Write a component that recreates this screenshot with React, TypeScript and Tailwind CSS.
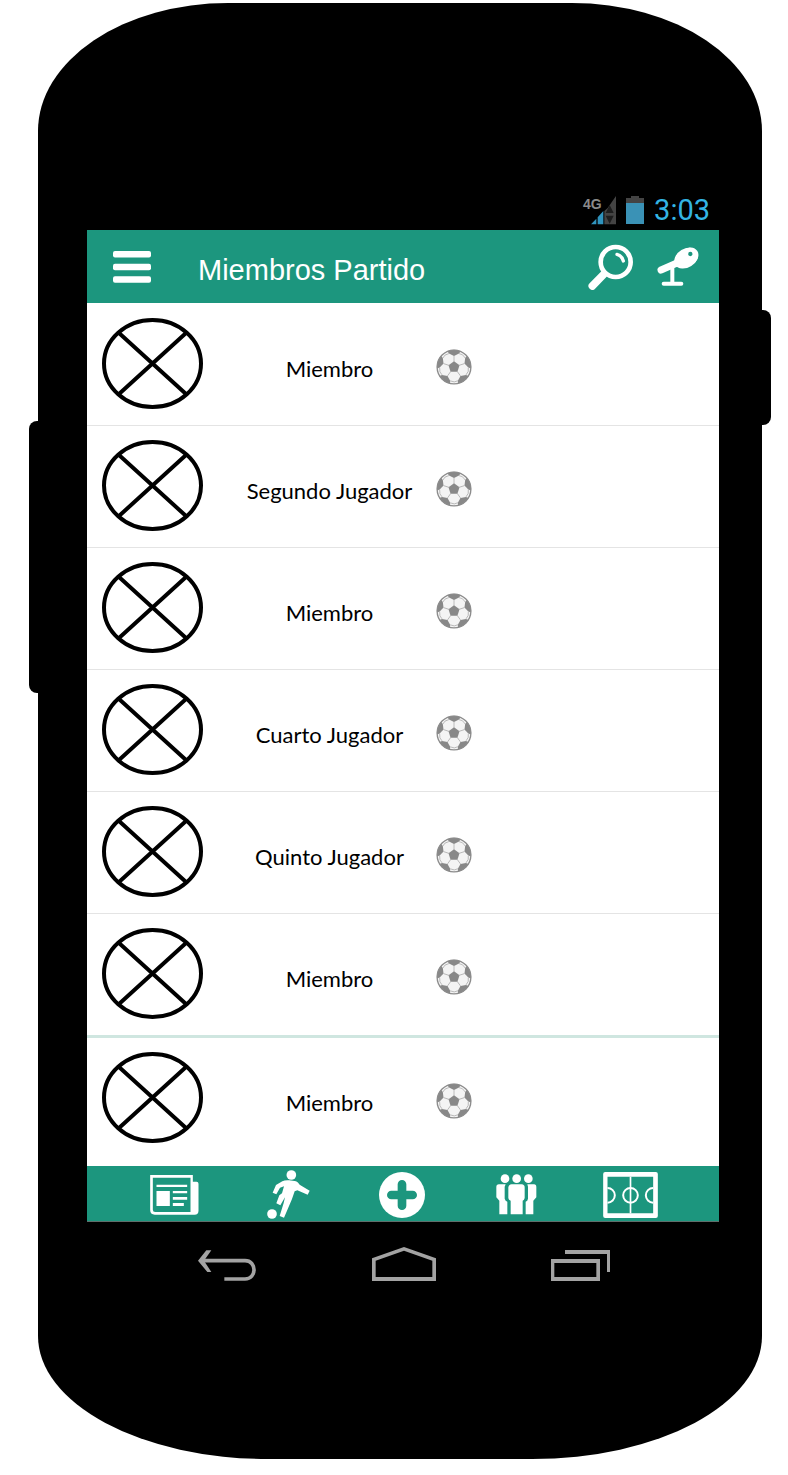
import React from "react";

const members: string[] = [
  "Miembro",
  "Segundo Jugador",
  "Miembro",
  "Cuarto Jugador",
  "Quinto Jugador",
  "Miembro",
  "Miembro",
];

function SignalIcon() {
  return (
    <svg width="33" height="29" viewBox="66 42 99 87" aria-hidden="true">
      <path d="M130 127V87L140 78L165 42V127Z" fill="#444" />
      <path d="M146 69L158 93H134Z M134 101H158L146 125Z" fill="#1d1d1d" />
      <path d="M90 127L106 110V127Z M110 127V106L127 87V127Z" fill="#2f93bd" />
    </svg>
  );
}

function BatteryIcon() {
  return (
    <svg width="18" height="28" viewBox="0 0 18 28" aria-hidden="true">
      <path d="M5 0H13V2H18V8H0V2H5Z" fill="#444" />
      <path d="M0 7H18V28H0Z" fill="#3a92b6" />
    </svg>
  );
}

function MenuIcon() {
  return (
    <svg width="38" height="32" viewBox="0 0 38 32" fill="#fff" aria-hidden="true">
      <rect width="38" height="6.5" rx="2" />
      <rect y="12.7" width="38" height="6.5" rx="2" />
      <rect y="25.3" width="38" height="6.5" rx="2" />
    </svg>
  );
}

function SearchIcon() {
  return (
    <svg width="46" height="46" viewBox="84 190 138 138" fill="none" stroke="#fff" strokeLinecap="round" aria-hidden="true">
      <circle cx="167" cy="244" r="45" strokeWidth="14" />
      <path d="M131 281L97 316" strokeWidth="23" />
      <path d="M171 221Q185 224 190 241" strokeWidth="10" />
    </svg>
  );
}

function WhistleIcon() {
  return (
    <svg width="42" height="41" viewBox="290 196 126 123" fill="none" stroke="#fff" strokeLinecap="round" aria-hidden="true">
      <path d="M302 268L350 247" strokeWidth="21" />
      <path d="M336 252V308M310 309H363" strokeWidth="12" />
      <ellipse cx="378" cy="232" rx="39" ry="28" transform="rotate(-32 378 232)" fill="#fff" stroke="none" />
      <circle cx="388" cy="226" r="25" fill="#fff" stroke="none" />
      <circle cx="390" cy="220" r="6.5" fill="#1c967e" stroke="none" />
    </svg>
  );
}

function AvatarPlaceholder() {
  return (
    <svg className="shrink-0" width="101" height="91" viewBox="0 0 101 91" fill="none" stroke="#000" strokeWidth="4" aria-hidden="true">
      <ellipse cx="50.5" cy="45.5" rx="48.5" ry="43.5" />
      <path d="M17 15L84 76M84 15L17 76" />
    </svg>
  );
}

function BallIcon() {
  return (
    <svg className="shrink-0" width="36" height="36" viewBox="-18 -18 36 36" aria-hidden="true">
      <circle r="16.9" fill="#f4f4f4" />
      <path d="M0 -5.8L5.5 -1.8L3.4 4.7H-3.4L-5.5 -1.8Z" fill="#888" />
      {[0, 72, 144, 216, 288].map((angle) => (
        <g key={angle} transform={`rotate(${angle})`}>
          <path d="M0 -11L5 -13.4L6.6 -15.8A17 17 0 0 0 -6.6 -15.8L-5 -13.4Z" fill="#888" />
          <path d="M0 -5V-11M5 -13.4Q9 -13.2 11.2 -9" stroke="#b0b0b0" strokeWidth="0.8" fill="none" />
        </g>
      ))}
      <circle r="16.9" fill="none" stroke="#8c8c8c" strokeWidth="1.3" />
    </svg>
  );
}

function NewsIcon() {
  return (
    <svg width="49" height="40" viewBox="61 48 146 120" aria-hidden="true">
      <path
        fill="#fff"
        fillRule="evenodd"
        d="M61 48H189V68H200Q206 68 206 74V155Q206 167 194 167H75Q61 167 61 153ZM69 56V152Q69 159 76 159H182V56Z"
      />
      <path fill="#fff" d="M80 77H172V84H80ZM80 96H120V141H80ZM129 96H172V103H129ZM129 114H172V122H129ZM129 132H162V141H129Z" />
    </svg>
  );
}

function PlayerIcon() {
  return (
    <svg width="43" height="49" viewBox="413 29 129 147" fill="#fff" aria-hidden="true">
      <circle cx="486" cy="44" r="14.5" />
      <circle cx="428" cy="161" r="14.5" />
      <path d="M459 63Q466 59 480 60L500 63Q506 65 511 73L541 91L535 103L504 90L496 93L488 116L464 172L451 167L463 128L467 111L453 135L441 129L450 105L458 99L464 78L452 82L441 102L430 97L440 74Z" />
    </svg>
  );
}

function AddIcon() {
  return (
    <svg width="46" height="46" viewBox="60 36 138 138" aria-hidden="true">
      <circle cx="129" cy="105" r="69" fill="#fff" />
      <path d="M129 73V137M97 105H161" stroke="#1c967e" strokeWidth="26" strokeLinecap="round" />
    </svg>
  );
}

function PeopleIcon() {
  return (
    <svg width="41" height="41" viewBox="407 44 123 123" fill="#fff" aria-hidden="true">
      <circle cx="434" cy="58" r="13" />
      <circle cx="469" cy="58" r="13" />
      <circle cx="504" cy="58" r="13" />
      <path d="M416 75H436L433 82V118Q435 125 441 127V165H417V124L408 114V83Q408 75 416 75Z" />
      <path d="M521 75H501L503 82V118Q502 125 496 127V165H519V124L528 114V83Q528 75 521 75Z" />
      <path d="M454 75H484Q493 76 493 84V116Q492 123 487 124V165H451V124Q445 123 444 116V84Q445 76 454 75Z" />
    </svg>
  );
}

function FieldIcon() {
  return (
    <svg width="55" height="46" viewBox="64 30 164 138" fill="none" stroke="#fff" strokeWidth="6" aria-hidden="true">
      <path fill="#fff" stroke="none" fillRule="evenodd" d="M70 30H222Q228 30 228 36V162Q228 168 222 168H70Q64 168 64 162V36Q64 30 70 30ZM77 44V154H214V44Z" />
      <path d="M146 44V154" strokeWidth="5" />
      <circle cx="146" cy="100" r="22" />
      <path d="M77 78A22 22 0 0 1 77 122M214 78A22 22 0 0 0 214 122" />
    </svg>
  );
}

const tabs = [
  { label: "Noticias", Icon: NewsIcon },
  { label: "Jugador", Icon: PlayerIcon },
  { label: "Crear", Icon: AddIcon },
  { label: "Grupo", Icon: PeopleIcon },
  { label: "Cancha", Icon: FieldIcon },
];

function BackIcon() {
  return (
    <svg width="58" height="31" viewBox="57 45 174 93" fill="none" stroke="#a3a3a3" aria-hidden="true">
      <path d="M66 77H198C234 77 234 132 198 132H136" strokeWidth="11" />
      <path fill="#a3a3a3" stroke="none" d="M57 77L82 46H97L75 77L97 111H85Z" />
    </svg>
  );
}

function HomeIcon() {
  return (
    <svg width="64" height="34" viewBox="576 36 192 102" aria-hidden="true">
      <path fill="#a3a3a3" fillRule="evenodd" d="M576 70L672 36L768 70V138H576ZM587 77V126H757V77L672 47Z" />
    </svg>
  );
}

function RecentsIcon() {
  return (
    <svg width="59" height="31" viewBox="1116 45 177 93" fill="#a3a3a3" aria-hidden="true">
      <path fillRule="evenodd" d="M1116 72H1263V138H1116ZM1126 84V126H1252V84Z" />
      <path d="M1158 45H1293V111H1284V57H1158Z" />
    </svg>
  );
}

const systemKeys = [
  { label: "Atrás", Icon: BackIcon },
  { label: "Inicio", Icon: HomeIcon },
  { label: "Recientes", Icon: RecentsIcon },
];

export default function App() {
  return (
    <div className="min-h-screen bg-white pt-[3px] pr-[26px] pb-4 pl-[38px] font-['Liberation_Sans',sans-serif]">
      <div className="relative rounded-[190px_190px_230px_230px/128px_128px_123px_123px] bg-black pt-[187px] pr-[43px] pb-[178px] pl-[49px]">
        <span className="absolute top-[418px] -left-[9px] h-[272px] w-[10px] rounded-l-lg bg-black" />
        <span className="absolute top-[307px] -right-[9px] h-[115px] w-[10px] rounded-r-lg bg-black" />

        <div className="flex h-10 items-center justify-end gap-[10px] pr-[9px]">
          <div className="relative flex">
            <SignalIcon />
            <span className="absolute top-0 left-0 text-sm leading-4 font-bold text-[#8a8a8a]">4G</span>
          </div>
          <BatteryIcon />
          <time className="font-['Roboto',sans-serif] text-[29px] leading-8 text-[#33b5e5]">3:03</time>
        </div>

        <header className="flex h-[73px] items-center bg-[#1c967e] pr-5 pl-[26px]">
          <button type="button" aria-label="Menú">
            <MenuIcon />
          </button>
          <h1 className="grow pt-[6px] pl-[47px] text-[29px] leading-8 whitespace-nowrap text-white">Miembros Partido</h1>
          <div className="flex items-center gap-[23px]">
            <button type="button" aria-label="Buscar">
              <SearchIcon />
            </button>
            <button type="button" aria-label="Silbato">
              <WhistleIcon />
            </button>
          </div>
        </header>

        <ul className="bg-white">
          {members.map((name, index) => (
            <li
              key={index}
              className="flex h-[122px] items-start border-[#e4e4e4] pt-[14px] pl-[15px] not-first:border-t first:pt-[15px] last:h-[131px] last:border-t-[3px] last:border-[#cfe6e0]"
            >
              <AvatarPlaceholder />
              <div className="flex items-center pt-[31px]">
                <span className="w-[233px] pt-1 pl-5 text-center font-['Lato',sans-serif] text-[22px] leading-8 text-black">
                  {name}
                </span>
                <BallIcon />
              </div>
            </li>
          ))}
        </ul>

        <nav className="grid h-[56px] grid-cols-5 border-b border-[#5f6f6b] bg-[#1c967e] pt-[2px] pr-8 pl-[31px]">
          {tabs.map(({ label, Icon }) => (
            <button key={label} type="button" aria-label={label} className="flex items-center justify-center">
              <Icon />
            </button>
          ))}
        </nav>

        <div className="grid h-[59px] grid-cols-3 pr-[50px] pl-[52px]">
          {systemKeys.map(({ label, Icon }) => (
            <button key={label} type="button" aria-label={label} className="flex items-end justify-center">
              <Icon />
            </button>
          ))}
        </div>
      </div>
    </div>
  );
}
